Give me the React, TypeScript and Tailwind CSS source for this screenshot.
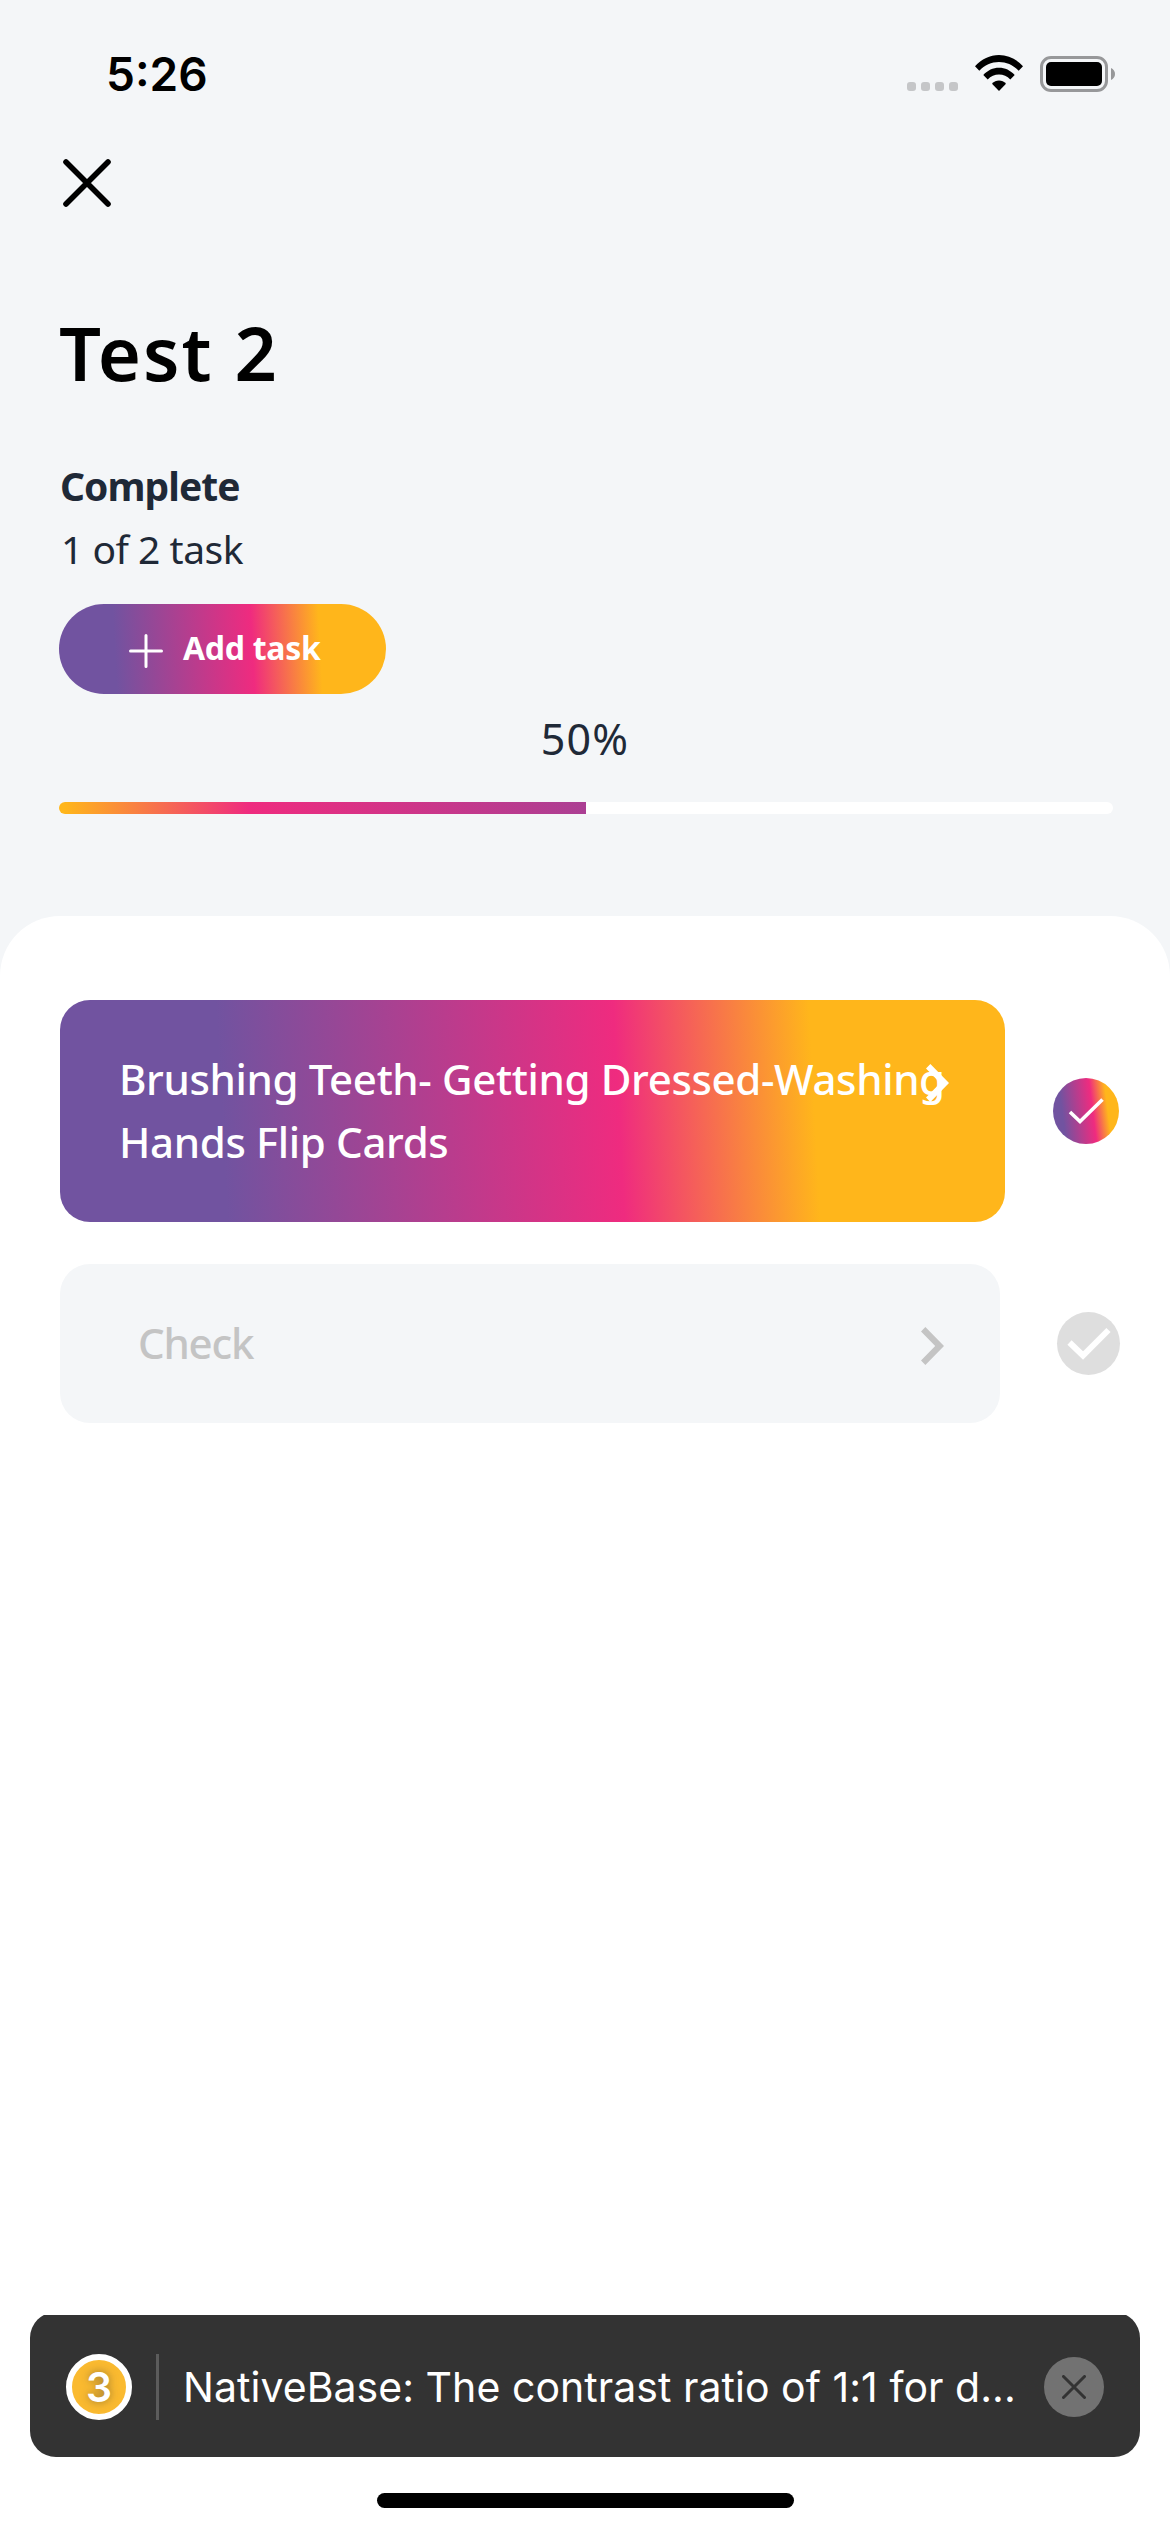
import React from "react";

const brand =
  "bg-[linear-gradient(87deg,#7153a0_17.5%,#ef2b7f_59%,#ffb61b_79.5%)]";

function StatusBar() {
  return (
    <div className="flex h-[148px] items-center pl-[106px] pr-[55px] font-['Inter',sans-serif]">
      <span className="text-[46px] leading-[60px] font-semibold">5:26</span>
      <div className="ml-auto flex items-center">
        <div className="mt-[25px] flex gap-[5px]">
          {[0, 1, 2, 3].map((i) => (
            <span key={i} className="size-[9px] rounded-[3px] bg-[#c5c6c8]" />
          ))}
        </div>
        <svg className="-mt-[2px] ml-[17px]" width="48" height="36" viewBox="0 0 48 36" fill="black">
          <path d="M0 11.2C6.500 4 15 0 24 0S41.500 4 48 11.200L43.700 15.800C38.500 10 31.500 6.900 24 6.900S9.500 10 4.300 15.800Z" />
          <path d="M8.300 19.900C12.600 15.300 18 12.700 24 12.700S35.400 15.300 39.700 19.900L35.300 24.400C32.200 21.200 28.300 19.500 24 19.500S15.800 21.200 12.700 24.400Z" />
          <path d="M17 28.700C19 26.500 21.300 25.400 24 25.400S29 26.500 31 28.700L24 36Z" />
        </svg>
        <div className="ml-[17px] h-[36px] w-[68px] rounded-[11px] border-[3px] border-[#97989a] p-[3px]">
          <div className="size-full rounded-[5px] bg-black" />
        </div>
        <svg className="ml-[3px]" width="4" height="12" viewBox="0 0 4 12" fill="#97989a">
          <path d="M0 0C2.500 1 4 3.400 4 6S2.500 11 0 12Z" />
        </svg>
      </div>
    </div>
  );
}

function Chevron({ className }: { className: string }) {
  return (
    <svg className={className} width="23" height="38" viewBox="8.590 6 7.410 12" preserveAspectRatio="none" fill="currentColor">
      <path d="M10 6L8.590 7.410 13.170 12l-4.580 4.590L10 18l6-6z" />
    </svg>
  );
}

export default function App() {
  return (
    <div className="flex h-[2532px] w-[1170px] flex-col overflow-hidden bg-[#f4f6f8] font-['Noto_Sans',sans-serif] text-black">
      <StatusBar />

      <header className="flex flex-col pl-[59px] pr-[57px]">
        <svg className="mt-[11px] ml-[4px]" width="48" height="48" viewBox="0 0 48 48" fill="none" stroke="black" strokeWidth="5.600" strokeLinecap="round">
          <path d="M3 3L45 45M45 3L3 45" />
        </svg>
        <h1 className="mt-[96px] text-[74px] leading-[100px] font-semibold tracking-[1.900px]">Test 2</h1>
        <div className="mt-[51px] ml-[1px] text-[39px] leading-[63px] text-[#1f2937]">
          <p className="font-bold tracking-[-0.950px]">Complete</p>
          <p className="ml-[1px] tracking-[-0.500px]">1 of 2 task</p>
        </div>
        <button className={`mt-[24px] flex h-[90px] w-[327px] items-center rounded-full pl-[70px] text-white ${brand}`}>
          <svg className="mt-[4px]" width="34" height="34" viewBox="0 0 34 34" fill="none" stroke="white" strokeWidth="3" strokeLinecap="round">
            <path d="M17 1.500V32.500M1.500 17H32.500" />
          </svg>
          <span className="-mt-[3px] ml-[20px] text-[32px] leading-[44px] font-bold tracking-[-0.300px]">Add task</span>
        </button>
        <p className="mt-[13px] pr-[2px] text-center text-[43px] leading-[63px] tracking-[1.200px] text-[#1f2937]">50%</p>
        <div className="mt-[32px] h-[12px] overflow-hidden rounded-full bg-white">
          <div className="h-full w-1/2 bg-[linear-gradient(90deg,#ffb61b_1%,#ef2b7f_36%,#ab3f93_100%)]" />
        </div>
      </header>

      <main className="mt-[102px] flex flex-1 flex-col rounded-t-[60px] bg-white pt-[84px]">
        <div className="flex items-center pl-[60px]">
          <div className={`relative h-[222px] w-[945px] rounded-[30px] pt-[47px] pl-[59px] text-white ${brand}`}>
            <p className="text-[42px] leading-[63px] font-medium tracking-[-0.350px] whitespace-nowrap">
              Brushing Teeth- Getting Dressed-Washing
              <br />
              Hands Flip Cards
            </p>
            <Chevron className="absolute top-[64px] right-[56px] text-white" />
          </div>
          <div className="ml-[48px] flex size-[66px] items-center justify-center rounded-full bg-[linear-gradient(83deg,#7153a0_17.5%,#ef2b7f_59%,#ffb61b_79.5%)]">
            <svg width="36" height="28" viewBox="0 0 36 28" fill="none" stroke="white" strokeWidth="3.600">
              <path d="M2 15L12 24.500L34.500 2.500" />
            </svg>
          </div>
        </div>

        <div className="mt-[42px] flex items-center pl-[60px]">
          <div className="flex h-[159px] w-[940px] items-center rounded-[30px] bg-[#f4f6f8] pr-[56px] pl-[78px] text-[#c4c4c4]">
            <span className="-mt-[3px] text-[42px] leading-[63px] font-medium tracking-[-1.200px]">Check</span>
            <Chevron className="mt-[5px] ml-auto" />
          </div>
          <div className="ml-[57px] flex size-[63px] items-center justify-center rounded-full bg-[#dedede]">
            <svg width="44" height="34" viewBox="0 0 44 34" fill="none" stroke="white" strokeWidth="6">
              <path d="M2.500 15.500L16 28.500L41.500 3" />
            </svg>
          </div>
        </div>

        <div className="mx-[30px] mt-auto h-[142px] overflow-hidden font-['Inter',sans-serif]">
          <div className="-mt-[3px] flex h-[145px] items-center rounded-[26px] bg-[#333333] pt-[5px] pr-[36px] pl-[36px] text-white">
            <div className="flex size-[66px] shrink-0 items-center justify-center rounded-full border-[6px] border-white bg-[#faba30] text-[41px] leading-[54px] font-semibold [text-shadow:0_0_9px_rgb(51_51_51/50%)]">
              3
            </div>
            <div className="ml-[24px] h-[66px] w-[3px] bg-[#5c5c5c]" />
            <p className="ml-[24px] text-[41px] leading-[54px] tracking-[0.040px] whitespace-nowrap">
              NativeBase: The contrast ratio of 1:1 for d...
            </p>
            <div className="ml-auto flex size-[60px] shrink-0 items-center justify-center rounded-full bg-[#727272]">
              <svg width="24" height="24" viewBox="0 0 24 24" fill="none" stroke="#333333" strokeWidth="3" strokeLinecap="round">
                <path d="M1.500 1.500L22.500 22.500M22.500 1.500L1.500 22.500" />
              </svg>
            </div>
          </div>
        </div>
        <div className="mt-[36px] mb-[24px] ml-[377px] h-[15px] w-[417px] rounded-full bg-black" />
      </main>
    </div>
  );
}
